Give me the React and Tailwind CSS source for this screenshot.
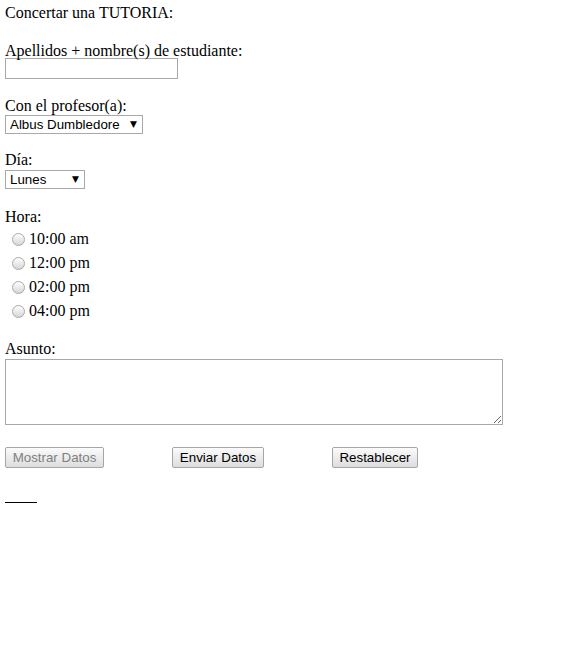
import React, { useState } from "react";

const sans = "font-['Liberation_Sans',Arial,sans-serif]";

function Select({ value, options, width }) {
  return (
    <div className={`relative h-[19px] ${width}`}>
      <select
        defaultValue={value}
        className={`appearance-none w-full h-full border border-[#a9a9a9] bg-white pl-[4px] pr-[18px] text-[13.333px] leading-[17px] text-black rounded-none outline-none ${sans}`}
      >
        {options.map((o) => (
          <option key={o}>{o}</option>
        ))}
      </select>
      <span className="pointer-events-none absolute right-[6px] top-[5px] text-[9px] leading-[9px] text-black font-['DejaVu_Sans',sans-serif]">
        ▼
      </span>
    </div>
  );
}

function Button({ children, disabled, width }) {
  return (
    <button
      type="button"
      disabled={disabled}
      className={`${width} h-[21px] border border-[#a6a6a6] rounded-[2px] bg-gradient-to-b from-[#fbfbfb] to-[#dddddd] text-[13.333px] leading-[17px] text-center ${disabled ? "text-[#808080]" : "text-black"} ${sans}`}
    >
      {children}
    </button>
  );
}

export default function App() {
  const [hora, setHora] = useState(null);
  const horas = ["10:00 am", "12:00 pm", "02:00 pm", "04:00 pm"];

  return (
    <div className="bg-white min-h-[659px] px-[5px] pt-[4px] text-[16px] leading-[18px] text-black font-['Liberation_Serif','Times_New_Roman',serif]">
      <div>Concertar una TUTORIA:</div>

      <div className="mt-[20px]">Apellidos + nombre(s) de estudiante:</div>
      <input
        type="text"
        className="block mt-[-2px] w-[173px] h-[21px] border border-[#a9a9a9] bg-white outline-none px-[2px] text-[13px]"
      />

      <div className="mt-[18px]">Con el profesor(a):</div>
      <Select
        value="Albus Dumbledore"
        options={["Albus Dumbledore", "Severus Snape", "Minerva McGonagall"]}
        width="w-[138px]"
      />

      <div className="mt-[17px]">Día:</div>
      <div className="mt-[1px]">
        <Select
          value="Lunes"
          options={["Lunes", "Martes", "Miércoles", "Jueves", "Viernes"]}
          width="w-[80px]"
        />
      </div>

      <div className="mt-[19px]">Hora:</div>
      <div className="mt-[1px] flex flex-col">
        {horas.map((h) => (
          <label key={h} className="h-[24px] flex items-center">
            <input
              type="radio"
              name="hora"
              checked={hora === h}
              onChange={() => setHora(h)}
              className="appearance-none ml-[7px] mr-[4px] w-[13px] h-[13px] rounded-full border border-[#a8a8a8] bg-gradient-to-b from-[#ffffff] to-[#d6d6d6] checked:bg-[#4a90e2]"
            />
            <span>{h}</span>
          </label>
        ))}
      </div>

      <div className="mt-[17px]">Asunto:</div>
      <textarea className="block mt-[1px] w-[498px] h-[66px] border border-[#a9a9a9] bg-white outline-none p-[2px] text-[13px]" />

      <div className="mt-[22px] flex gap-[68px]">
        <Button disabled width="w-[99px]">Mostrar Datos</Button>
        <Button width="w-[92px]">Enviar Datos</Button>
        <Button width="w-[86px]">Restablecer</Button>
      </div>

      <div className="mt-[34px] w-[32px] h-px bg-black" />
    </div>
  );
}
